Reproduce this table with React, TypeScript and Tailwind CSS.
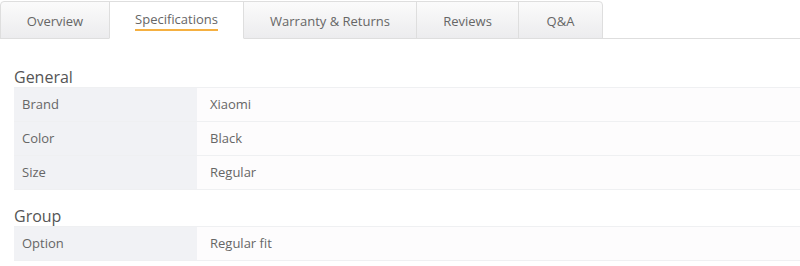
const tabs = [
  { label: "Overview", width: "w-[110px]" },
  { label: "Specifications", width: "w-[135px]", active: true },
  { label: "Warranty & Returns", width: "w-[174px]" },
  { label: "Reviews", width: "w-[103px]" },
  { label: "Q&A", width: "w-[85px]" },
];

const groups = [
  {
    title: "General",
    rows: [
      ["Brand", "Xiaomi"],
      ["Color", "Black"],
      ["Size", "Regular"],
    ],
  },
  {
    title: "Group",
    rows: [["Option", "Regular fit"]],
  },
];

export default function App() {
  return (
    <div className="w-[800px] h-[266px] overflow-hidden bg-white font-['Open_Sans',sans-serif] text-[13px] text-[#666]">
      <div className="flex h-[39px] items-end border-b border-[#dedede]">
        {tabs.map((t, i) => (
          <div
            key={t.label}
            className={
              "-mb-px flex h-[38px] shrink-0 items-center justify-center border border-[#dedede] " +
              t.width +
              (i === 0 ? " rounded-tl-[4px]" : "") +
              (i === tabs.length - 1 ? " rounded-tr-[4px]" : "") +
              (i > 0 ? " -ml-px" : "") +
              (t.active
                ? " relative z-10 border-b-white bg-white"
                : " bg-gradient-to-b from-[#fbfbfb] to-[#ececee]")
            }
          >
            {t.active ? (
              <span className="mt-[1px] border-b-2 border-[#f5b041] pb-[1px] leading-[18px]">{t.label}</span>
            ) : (
              <span className="mt-[2px] leading-[18px]">{t.label}</span>
            )}
          </div>
        ))}
      </div>

      <div className="pl-[14px] pt-[28px]">
        {groups.map((g, gi) => (
          <div key={g.title} className={gi > 0 ? "mt-[16px]" : ""}>
            <h3 className="text-[16px] leading-[20px] text-[#555]">{g.title}</h3>
            <div className="border-t border-[#eff0f2]">
              {g.rows.map(([k, v]) => (
                <div
                  key={k}
                  className="grid h-[34px] grid-cols-[183px_1fr] border-b border-[#eff0f2]"
                >
                  <div className="flex items-center bg-[#f1f2f5] pl-2">{k}</div>
                  <div className="flex items-center bg-[#fdfcfd] pl-[13px]">{v}</div>
                </div>
              ))}
            </div>
          </div>
        ))}
      </div>
    </div>
  );
}
